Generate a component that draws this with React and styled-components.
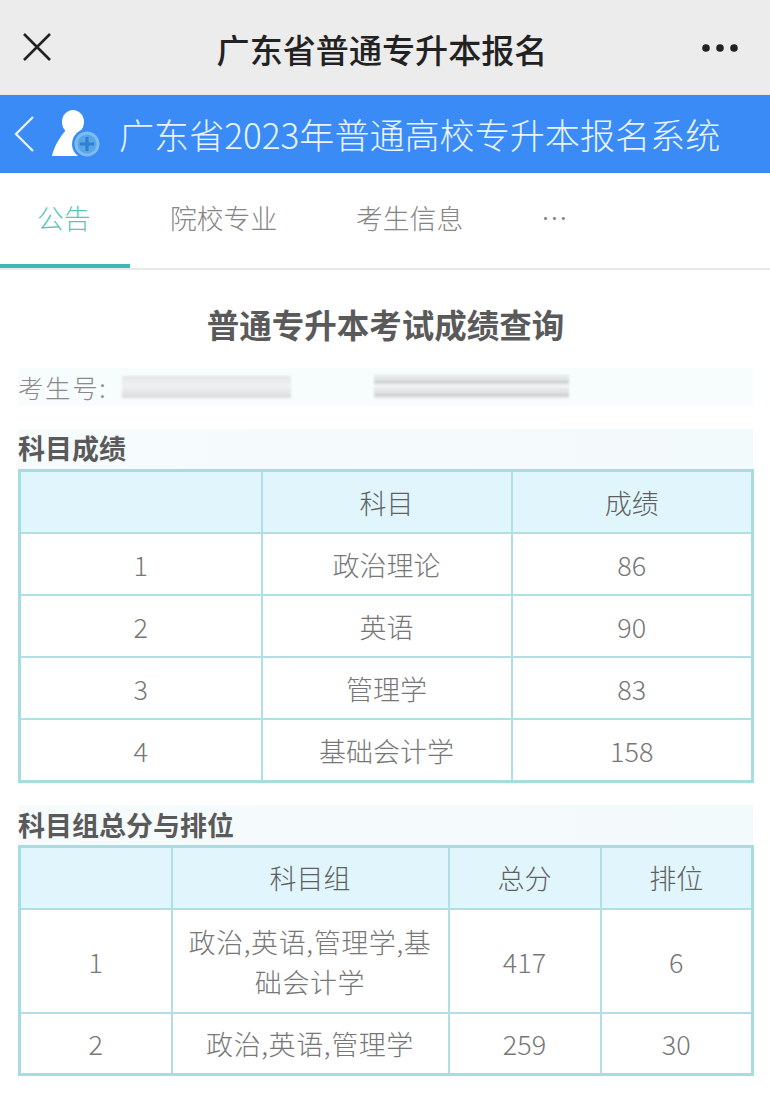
import React from "react";
import styled, { createGlobalStyle } from "styled-components";

const Global = createGlobalStyle`
  html, body { margin: 0; padding: 0; background: #fff; }
  body { font-family: "Noto Sans CJK SC", "Noto Sans", sans-serif; }
`;
const Page = styled.div`width: 770px; height: 1103px; overflow: hidden; background: #fff;`;
const TopBar = styled.header`
  height: 95px; box-sizing: border-box; background: #ececec; display: flex; align-items: center;
  justify-content: space-between; padding: 0 32px 0 22px; border-bottom: 1px solid #e4e4e4;
`;
const TopTitle = styled.h1`
  margin: 0; font-size: 33.1px; font-weight: 500; color: #222; line-height: 1; position: relative; top: 3px; left: 5px;
`;
const BlueBar = styled.div`
  height: 78px; background: #3a8bf5; display: flex; align-items: center; padding-left: 14px;
`;
const BlueTitle = styled.div`
  color: #e8f3ff; font-size: 35.1px; line-height: 1; margin-left: 17px; white-space: nowrap; font-weight: 300;
`;
const Tabs = styled.nav`
  height: 97px; box-sizing: border-box; display: flex; border-bottom: 2px solid #e9e9e9; position: relative;
`;
const Tab = styled.div`
  width: ${p => p.$w}px; box-sizing: border-box; padding-left: ${p => p.$pad}px; padding-top: 25px;
  font-size: 26.8px; line-height: 40px; font-weight: 300; color: ${p => p.$active ? "#5cc5b9" : "#858585"};
  border-bottom: 4px solid ${p => p.$active ? "#3fb8ad" : "transparent"}; height: 95px;
`;
const Content = styled.main`padding: 0 17px 0 18px;`;
const Heading = styled.h2`
  margin: 0; padding-top: 32px; height: 98px; box-sizing: border-box; text-align: center; font-size: 32.5px;
  line-height: 44px; font-weight: 700; color: #5a5a5a; position: relative;
`;
const IdRow = styled.div`
  height: 38px; background: #f7fcfd; display: flex; align-items: center; color: #8a8a8a; font-size: 25.5px; font-weight: 300;
  letter-spacing: 1.6px; line-height: 34px; padding-bottom: 1px; box-sizing: border-box;
`;
const Blur = styled.div`
  width: ${p => p.$w}px; height: ${p => p.$h}px; margin-left: ${p => p.$ml}px; filter: blur(1.2px);
  background: ${p => p.$bg};
`;
const SectionTitle = styled.h3`
  margin: ${p => p.$mt}px 0 0; height: ${p => p.$h}px; font-size: 27px; line-height: ${p => p.$lh}px; font-weight: 700; color: #5a5a5a;
  background: linear-gradient(90deg, #f6fbfc, #f3fafc);
  display: flex; align-items: flex-start;
`;
const Table = styled.table`
  width: 735px; table-layout: fixed; border-collapse: collapse; border: 3px solid #a6dde1; font-size: 27px; color: #777;
  font-weight: 300;
`;
const Th = styled.th`
  background: #e1f6fc; border: 2px solid #b0e0e5; font-weight: 300; height: 60px; padding: 0; color: #5f5f5f;
`;
const Td = styled.td`
  border: 2px solid #b0e0e5; text-align: center; height: 62px; padding: 2px 10px 0; line-height: 40px; box-sizing: border-box;
  letter-spacing: ${p => p.$spaced ? "0.6px" : "normal"};
`;
const IconBtn = styled.svg`display: block; flex: none;`;
const Avatar = styled(IconBtn)`margin-left: 18px;`;

const CloseIcon = () => (
  <IconBtn width="30" height="30" viewBox="0 0 30 30" fill="none" stroke="#222" strokeWidth="2.6">
    <path d="M2 2 L28 28 M28 2 L2 28" />
  </IconBtn>
);
const MoreIcon = () => (
  <IconBtn width="36" height="8" viewBox="0 0 36 8" fill="#222" style={{ marginTop: 2 }}>
    <circle cx="4" cy="4" r="3.8" /><circle cx="18" cy="4" r="3.8" /><circle cx="32" cy="4" r="3.8" />
  </IconBtn>
);
const Back = () => (
  <IconBtn width="20" height="36" viewBox="0 0 20 36" fill="none" stroke="#e8f3ff" strokeWidth="2.3">
    <path d="M19 1 L2 18 L19 35" />
  </IconBtn>
);
const UserAdd = () => (
  <Avatar width="50" height="50" viewBox="0 0 50 50">
    <ellipse cx="21" cy="13" rx="11" ry="12" fill="#fff" />
    <path fill="#fff" d="M14 21C8 28 2 37 0 47H30L24 22z" />
    <circle cx="35" cy="35" r="15" fill="#3a8bf5" />
    <circle cx="35" cy="35" r="12.5" fill="#7cbdf3" />
    <circle cx="35" cy="35" r="9.5" fill="#58a6e8" />
    <path d="M35 28v14M28 35h14" stroke="#2f7fd0" strokeWidth="3.2" />
  </Avatar>
);

const scores = [["1", "政治理论", "86"], ["2", "英语", "90"], ["3", "管理学", "83"], ["4", "基础会计学", "158"]];
const groups = [["1", "政治,英语,管理学,基础会计学", "417", "6", 104], ["2", "政治,英语,管理学", "259", "30", 62]];

export default function App() {
  return (
    <Page>
      <Global />
      <TopBar><CloseIcon /><TopTitle>广东省普通专升本报名</TopTitle><MoreIcon /></TopBar>
      <BlueBar><Back /><UserAdd /><BlueTitle>广东省2023年普通高校专升本报名系统</BlueTitle></BlueBar>
      <Tabs>
        <Tab $w={130} $pad={37} $active>公告</Tab>
        <Tab $w={186} $pad={40}>院校专业</Tab>
        <Tab $w={187} $pad={40}>考生信息</Tab>
        <Tab $w={100} $pad={38}>⋯</Tab>
      </Tabs>
      <Content>
        <Heading>普通专升本考试成绩查询</Heading>
        <IdRow>
          考生号:
          <Blur $w={169} $h={22} $ml={15} $bg="linear-gradient(180deg, #e3e5e6 0%, #eff1f2 45%, #e2e4e5 80%, #d8dadb 100%)" />
          <Blur $w={195} $h={24} $ml={83} $bg="repeating-linear-gradient(180deg, #e4e6e7 0 5px, #d2d5d5 5px 9px, #f2f3f4 9px 13px)" />
        </IdRow>
        <SectionTitle $mt={23} $h={40} $lh={38}>科目成绩</SectionTitle>
        <Table>
          <colgroup><col width="242" /><col width="250" /><col width="241" /></colgroup>
          <thead><tr><Th /><Th>科目</Th><Th>成绩</Th></tr></thead>
          <tbody>{scores.map(r => <tr key={r[0]}>{r.map((c, i) => <Td key={i}>{c}</Td>)}</tr>)}</tbody>
        </Table>
        <SectionTitle $mt={22} $h={40} $lh={40}>科目组总分与排位</SectionTitle>
        <Table>
          <colgroup><col width="152" /><col width="277" /><col width="152" /><col width="152" /></colgroup>
          <thead><tr><Th /><Th>科目组</Th><Th>总分</Th><Th>排位</Th></tr></thead>
          <tbody>{groups.map(r => (
            <tr key={r[0]} style={{ height: r[4] }}>
              <Td>{r[0]}</Td><Td $spaced>{r[1]}</Td><Td>{r[2]}</Td><Td>{r[3]}</Td>
            </tr>
          ))}</tbody>
        </Table>
      </Content>
    </Page>
  );
}
